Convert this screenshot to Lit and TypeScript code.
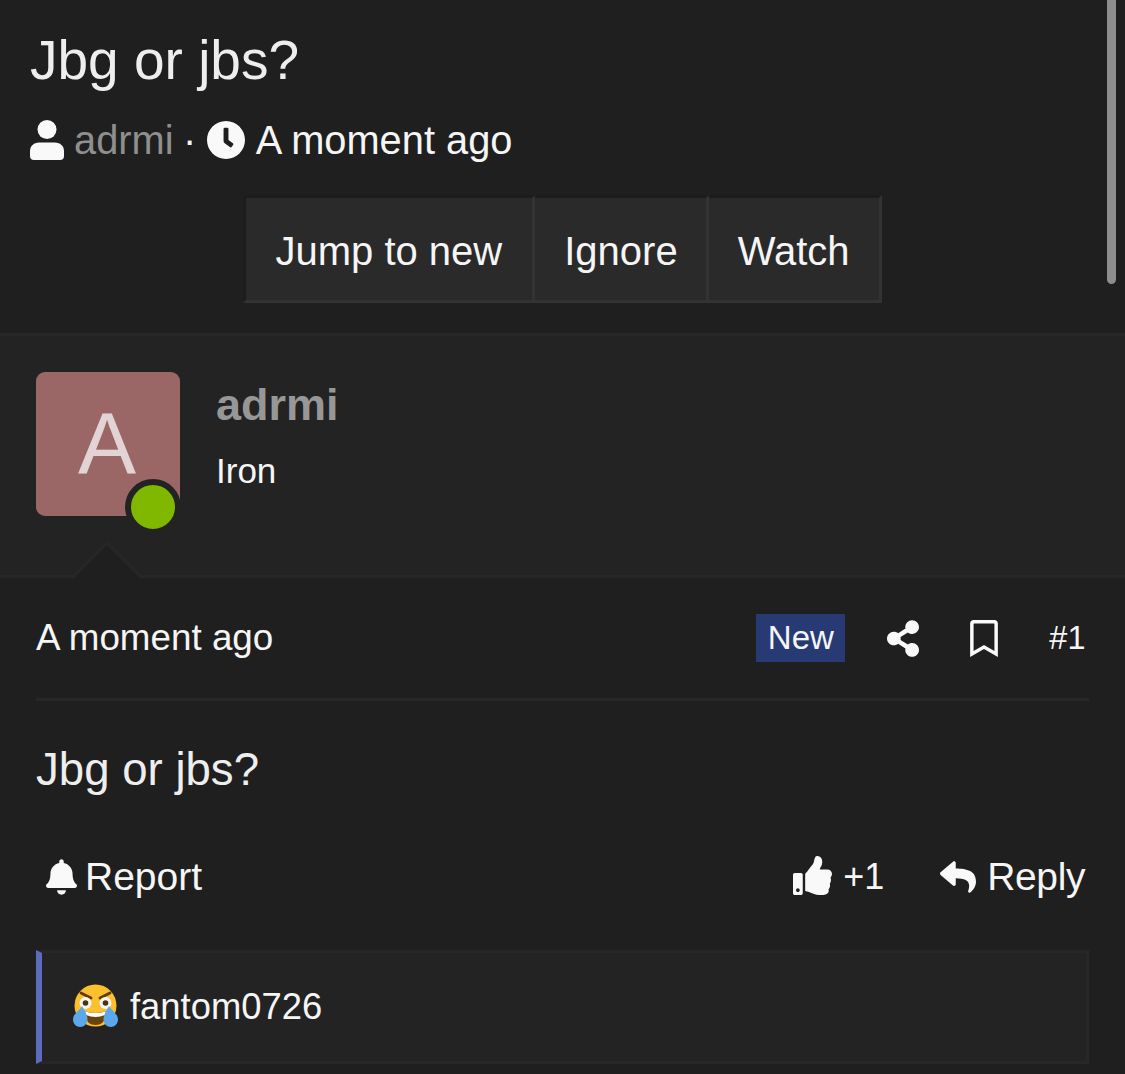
import { LitElement, html, css, svg } from "lit";
import { customElement } from "lit/decorators.js";

const ICONS = {
  share: svg`<path d="M352 320c-22.608 0-43.387 7.819-59.79 20.895l-102.486-64.054a96.551 96.551 0 0 0 0-41.683l102.486-64.054C308.613 184.181 329.392 192 352 192c53.019 0 96-42.981 96-96S405.019 0 352 0s-96 42.981-96 96c0 7.158.79 14.13 2.276 20.841L155.79 180.895C139.387 167.819 118.608 160 96 160c-53.019 0-96 42.981-96 96s42.981 96 96 96c22.608 0 43.387-7.819 59.79-20.895l102.486 64.054A96.301 96.301 0 0 0 256 416c0 53.019 42.981 96 96 96s96-42.981 96-96-42.981-96-96-96z"/>`,
  bookmark: svg`<path d="M336 0H48C21.49 0 0 21.49 0 48v464l192-112 192 112V48c0-26.51-21.49-48-48-48zm0 428.43l-144-84-144 84V54a6 6 0 0 1 6-6h276c3.314 0 6 2.683 6 5.996V428.43z"/>`,
  clock: svg`<path d="M256,8C119,8,8,119,8,256S119,504,256,504,504,393,504,256,393,8,256,8Zm92.49,313h0l-20,25a16,16,0,0,1-22.49,2.5h0l-67-49.72a40,40,0,0,1-15-31.23V112a16,16,0,0,1,16-16h32a16,16,0,0,1,16,16V256l58,42.5A16,16,0,0,1,348.49,321Z"/>`,
  bell: svg`<path d="M224 512c35.32 0 63.97-28.65 63.97-64H160.03c0 35.35 28.65 64 63.97 64zm215.39-149.71c-19.32-20.76-55.47-51.99-55.47-154.29 0-77.7-54.48-139.9-127.94-155.16V32c0-17.67-14.32-32-31.98-32s-31.98 14.33-31.98 32v20.84C118.56 68.1 64.08 130.3 64.08 208c0 102.3-36.15 133.53-55.47 154.29-6 6.45-8.66 14.16-8.61 21.71.11 16.4 12.98 32 32.1 32h383.8c19.12 0 32-15.6 32.1-32 .05-7.55-2.61-15.27-8.61-21.71z"/>`,
  thumb: svg`<path d="M104 224H24c-13.255 0-24 10.745-24 24v240c0 13.255 10.745 24 24 24h80c13.255 0 24-10.745 24-24V248c0-13.255-10.745-24-24-24zM64 472c-13.255 0-24-10.745-24-24s10.745-24 24-24 24 10.745 24 24-10.745 24-24 24zM384 81.452c0 42.416-25.97 66.208-33.277 94.548h101.723c33.397 0 59.397 27.746 59.553 58.098.084 17.938-7.546 37.249-19.439 49.197l-.11.11c9.836 23.337 8.237 56.037-9.308 79.469 8.681 25.895-.069 57.704-16.382 74.757 4.298 17.598 2.244 32.575-6.148 44.632C440.202 511.587 389.616 512 346.839 512l-2.845-.001c-48.287-.017-87.806-17.598-119.56-31.725-15.957-7.099-36.821-15.887-52.651-16.178-6.54-.12-11.783-5.457-11.783-11.998v-213.77c0-3.2 1.282-6.271 3.558-8.521 39.614-39.144 56.648-80.587 89.117-113.111 14.804-14.832 20.188-37.236 25.393-58.902C282.515 39.293 291.817 0 312 0c24 0 72 8 72 81.452z"/>`,
  reply: svg`<path d="M8.309 189.836L184.313 37.851C199.719 24.546 224 35.347 224 56.015v80.053c160.629 1.839 288 34.032 288 186.258 0 61.441-39.581 122.309-83.333 154.132-13.653 9.931-33.111-2.533-28.077-18.631 45.344-145.012-21.507-183.51-176.59-185.742V360c0 20.7-24.3 31.453-39.687 18.164l-176.004-152c-11.071-9.562-11.086-26.753 0-36.328z"/>`,
};

@customElement("app-root")
export class AppRoot extends LitElement {
  static styles = css`
    :host {
      display: block;
      position: relative;
      height: 1074px;
      overflow: hidden;
      background: #1f1f1f;
      color: #f5f5f5;
      font-family: "Liberation Sans", Arial, sans-serif;
    }
    svg { display: block; fill: #f9f9f9; flex: none; }
    .scrollbar {
      position: absolute; top: -10px; left: 1107px;
      width: 9px; height: 294px; border-radius: 5px; background: #8e8e8e;
    }
    .topic { height: 333px; padding: 30px 30px 0; box-sizing: border-box; }
    .title { margin: 0; font-size: 55px; line-height: 60px; font-weight: 400; color: #eeeeee; }
    .meta {
      display: flex; align-items: center; margin-top: 28px; height: 44px;
      font-size: 39.8px; line-height: 44px; color: #f5f5f5;
    }
    .meta .who { color: #8f8f8f; margin-left: 10px; }
    .meta .dot { margin: 0 10.5px 0 9.5px; }
    .meta .clock { margin-right: 11px; }
    .actions { display: flex; justify-content: center; margin: 33px -30px 0; }
    .btn {
      display: flex; align-items: center; box-sizing: content-box;
      padding: 4px 29px 0; height: 98px; font-size: 40px; color: #f5f5f5; background: #2a2a2a;
      border-style: solid; border-width: 3px 3px 3px 0;
      border-color: #1c1c1c #333333 #333333 #1c1c1c;
    }
    .btn:first-child { border-left-width: 3px; padding-right: 30px; }
    .btn:nth-child(2) { padding-right: 28px; }
    .head {
      position: relative; height: 245px; box-sizing: border-box;
      background: #232323; border-top: 3px solid #272727; border-bottom: 3px solid #272727;
      display: flex; padding: 36px 36px 0; gap: 36px;
    }
    .avatar {
      position: relative; width: 144px; height: 144px; border-radius: 9px; background: #9b6666;
      color: #e2d4d4; font-size: 87px; display: flex; align-items: center; justify-content: center;
      box-sizing: border-box; padding-right: 2px;
    }
    .status {
      position: absolute; left: 88px; top: 107px; width: 44px; height: 44px; border-radius: 50%;
      background: #80b800; border: 6.5px solid #232323; box-sizing: content-box; margin: -0.5px 0 0 0.5px;
    }
    .name { font-size: 45px; font-weight: 700; line-height: 50px; color: #979797; margin-top: 8px; }
    .rank { font-size: 35px; line-height: 40px; margin-top: 21px; color: #f5f5f5; }
    .arrow { position: absolute; left: 72px; bottom: -3px; }
    .post { padding: 0 36px; }
    .post-row {
      display: flex; align-items: center; height: 123px; box-sizing: border-box;
      border-bottom: 3px solid #272727; font-size: 36.8px; width: 1053px;
    }
    .spacer { flex: 1; }
    .badge {
      background: #273a73; color: #f5f5f5; font-size: 33px; width: 89px; height: 48px;
      display: flex; align-items: center; justify-content: center;
    }
    .share { margin-left: 42px; }
    .bm { margin-left: 51px; }
    .num { font-size: 32.5px; margin-left: 51px; margin-right: 3.5px; }
    .body { font-size: 45.6px; line-height: 52px; margin-top: 43px; color: #eeeeee; }
    .foot {
      display: flex; align-items: center; height: 60px; margin-top: 51px; font-size: 39px; width: 1049px;
    }
    .report-ic { margin-left: 10px; margin-right: 8px; }
    .thumb-ic { margin-bottom: 3px; }
    .plus { font-size: 36px; margin-left: 11px; }
    .reply-ic { margin-left: 56px; margin-right: 11px; }
    .reply { letter-spacing: -0.4px; }
    .quote {
      display: flex; align-items: center; height: 114px; box-sizing: border-box; width: 1053px;
      margin-top: 43px; background: #232323; font-size: 36.4px; padding-left: 31px; gap: 12px;
      border: 3px solid #272727; border-left: 6px solid #5c6bc0;
    }
    .emoji { margin-bottom: 2px; }
  `;

  render() {
    return html`
      <section class="topic">
        <h1 class="title">Jbg or jbs?</h1>
        <div class="meta">
          <svg width="34" height="40" viewBox="0 0 34 40">
            <circle cx="17" cy="9.5" r="9.5"/>
            <path d="M9 22.5h16c5 0 9 3.5 9 8.5v5a4 4 0 0 1-4 4H4a4 4 0 0 1-4-4v-5c0-5 4-8.5 9-8.5z"/>
          </svg>
          <span class="who">adrmi</span>
          <span class="dot">·</span>
          <svg class="clock" width="38" height="38" viewBox="8 8 496 496">${ICONS.clock}</svg>
          <span>A moment ago</span>
        </div>
        <div class="actions">
          <div class="btn">Jump to new</div>
          <div class="btn">Ignore</div>
          <div class="btn">Watch</div>
        </div>
      </section>

      <section class="head">
        <div class="avatar">A<span class="status"></span></div>
        <div>
          <div class="name">adrmi</div>
          <div class="rank">Iron</div>
        </div>
        <svg class="arrow" width="72" height="37" viewBox="0 0 72 37">
          <path d="M2 37 L35 3 L68 37 Z" style="fill:#1f1f1f"/>
          <path d="M1 36 L35 2 L69 36" style="fill:none" stroke="#272727" stroke-width="2.5"/>
        </svg>
      </section>

      <section class="post">
        <div class="post-row">
          <span>A moment ago</span>
          <span class="spacer"></span>
          <span class="badge">New</span>
          <svg class="share" width="32" height="37" viewBox="0 0 448 512">${ICONS.share}</svg>
          <svg class="bm" width="28" height="37" viewBox="0 0 384 512">${ICONS.bookmark}</svg>
          <span class="num">#1</span>
        </div>
        <div class="body">Jbg or jbs?</div>
        <div class="foot">
          <svg class="report-ic" width="31" height="36" viewBox="0 0 448 512">${ICONS.bell}</svg>
          <span>Report</span>
          <span class="spacer"></span>
          <svg class="thumb-ic" width="39" height="39" viewBox="0 0 512 512">${ICONS.thumb}</svg>
          <span class="plus">+1</span>
          <svg class="reply-ic" width="36" height="36" viewBox="0 0 512 512">${ICONS.reply}</svg>
          <span class="reply">Reply</span>
        </div>
        <div class="quote">
          <svg class="emoji" width="45" height="44" viewBox="0 0 45 44">
            <circle cx="22.5" cy="21.5" r="21" style="fill:#fbc02d"/>
            <path d="M8 9 L18 14 M37 9 L27 14" style="fill:none" stroke="#5f3d0a" stroke-width="2.8" stroke-linecap="round"/>
            <circle cx="12.5" cy="19" r="6" style="fill:#f5f5f5"/>
            <circle cx="32.5" cy="19" r="6" style="fill:#f5f5f5"/>
            <circle cx="12.5" cy="19" r="2.8" style="fill:#4a3410"/>
            <circle cx="32.5" cy="19" r="2.8" style="fill:#4a3410"/>
            <path d="M11.5 27 Q22.5 31 33.5 27 Q33 41 22.5 41 Q12 41 11.5 27 Z" style="fill:#6b4209"/>
            <path d="M12 27.2 Q22.5 31 33 27.2 L32 31 Q22.5 35 13 31 Z" style="fill:#ffffff"/>
            <path d="M9 22 C6 27 0 30 0 35.5 C0 40 3.5 43 7 43 C11 43 14.5 40 14.5 35.5 C14.5 30 11 26 9 22 Z" style="fill:#5ba8ec"/>
            <path d="M36 22 C39 27 45 30 45 35.5 C45 40 41.5 43 38 43 C34 43 30.5 40 30.5 35.5 C30.5 30 34 26 36 22 Z" style="fill:#5ba8ec"/>
          </svg>
          <span>fantom0726</span>
        </div>
      </section>

      <div class="scrollbar"></div>
    `;
  }
}
